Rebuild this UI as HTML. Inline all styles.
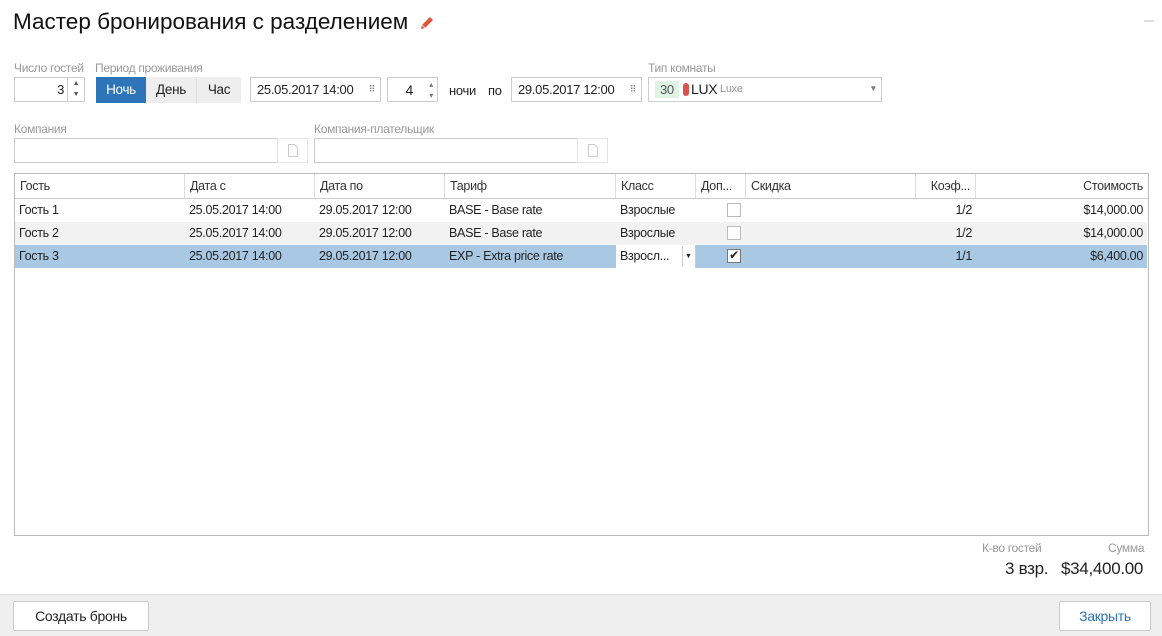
<!DOCTYPE html><html><head><meta charset="utf-8"><style>
*{box-sizing:border-box;margin:0;padding:0}
body{width:1162px;height:636px;background:#fff;font-family:"Liberation Sans",sans-serif;font-size:13px;color:#222;position:relative;overflow:hidden;letter-spacing:-0.3px}
.a{position:absolute}
.lbl{color:#999;font-size:12px}
.inp{position:absolute;border:1px solid #ccc;background:#fff;height:25px}
.hd{position:absolute;top:174px;height:25px;border-right:1px solid #ddd;padding:5px 5px;font-size:12.5px;color:#333;background:#fff}
.row{position:absolute;left:15px;width:1132px;height:23px}
.c{position:absolute;top:4px;font-size:12.5px;white-space:nowrap}
.cb{position:absolute;left:712px;top:4px;width:14px;height:14px;border:1px solid #bbb;background:#fff}
.btn{position:absolute;border:1px solid #ccc;background:#fff;border-radius:2px;height:30px;font-size:14px;text-align:center;line-height:28px}
</style></head><body>
<div class="a" style="left:13px;top:9px;font-size:22.5px;color:#111;letter-spacing:0">Мастер бронирования с разделением</div>
<svg class="a" style="left:419px;top:15px" width="16" height="16" viewBox="0 0 16 16"><path d="M2 14 L3 10 L11 2 L14 5 L6 13 Z" fill="#e0553a"/><path d="M3 10 L6 13" stroke="#fff" stroke-width="0.8"/></svg>
<div class="a" style="left:1144px;top:20px;width:10px;height:2px;background:#ddd"></div>

<div class="a lbl" style="left:14px;top:61px">Число гостей</div>
<div class="a lbl" style="left:95px;top:61px">Период проживания</div>
<div class="a lbl" style="left:648px;top:61px">Тип комнаты</div>
<div class="inp" style="left:14px;top:77px;width:54px;text-align:right;padding:4px 3px 0 0">3</div>
<div class="inp" style="left:67px;top:77px;width:18px;font-size:7px;color:#555;text-align:center;line-height:11px">▲<br>▼</div>
<div class="a" style="left:96px;top:77px;width:50px;height:26px;background:#2d74b8;color:#fff;text-align:center;line-height:26px;font-size:13.5px">Ночь</div>
<div class="a" style="left:146px;top:77px;width:51px;height:26px;background:#eee;text-align:center;line-height:26px;font-size:13.5px;border-right:1px solid #ddd">День</div>
<div class="a" style="left:197px;top:77px;width:44px;height:26px;background:#eee;text-align:center;line-height:26px;font-size:13.5px">Час</div>
<div class="inp" style="left:250px;top:77px;width:131px;padding:4px 6px">25.05.2017 14:00<span style="position:absolute;right:5px;font-size:9px;color:#777;top:6px">⠿</span></div>
<div class="inp" style="left:387px;top:77px;width:51px;padding:4px 24px 0 0;text-align:right;font-size:14px">4<span style="position:absolute;right:4px;top:1px;font-size:8px;color:#777;line-height:11px">▴<br>▾</span></div>
<div class="a" style="left:449px;top:83px">ночи</div>
<div class="a" style="left:488px;top:83px">по</div>
<div class="inp" style="left:511px;top:77px;width:131px;padding:4px 6px">29.05.2017 12:00<span style="position:absolute;right:5px;font-size:9px;color:#777;top:6px">⠿</span></div>
<div class="inp" style="left:648px;top:77px;width:234px">
<span class="a" style="left:6px;top:3px;background:#e0f4e6;color:#555;padding:1px 5px;font-size:13px">30</span>
<span class="a" style="left:34px;top:5px;width:6px;height:13px;background:#d9534f;border-radius:3px"></span>
<span class="a" style="left:42px;top:3px;font-size:14px">LUX</span>
<span class="a" style="left:71px;top:5px;font-size:11px;color:#999">Luxe</span>
<span class="a" style="right:4px;top:6px;font-size:8px;color:#777">▼</span></div>

<div class="a lbl" style="left:14px;top:122px">Компания</div>
<div class="a lbl" style="left:314px;top:122px">Компания-плательщик</div>
<div class="inp" style="left:14px;top:138px;width:264px"></div>
<div class="inp" style="left:277px;top:138px;width:31px;border-color:#e3e3e3"><svg class="a" style="left:10px;top:5px" width="10" height="13"><path d="M.5 .5h6l3 3v9h-9z" fill="none" stroke="#ccc"/></svg></div>
<div class="inp" style="left:314px;top:138px;width:264px"></div>
<div class="inp" style="left:577px;top:138px;width:31px;border-color:#e3e3e3"><svg class="a" style="left:10px;top:5px" width="10" height="13"><path d="M.5 .5h6l3 3v9h-9z" fill="none" stroke="#ccc"/></svg></div>

<div class="a" style="left:14px;top:173px;width:1135px;height:363px;border:1px solid #bbb"></div>
<div class="hd" style="left:15px;width:170px">Гость</div>
<div class="hd" style="left:185px;width:130px">Дата с</div>
<div class="hd" style="left:315px;width:130px">Дата по</div>
<div class="hd" style="left:445px;width:171px">Тариф</div>
<div class="hd" style="left:616px;width:80px">Класс</div>
<div class="hd" style="left:696px;width:50px">Доп...</div>
<div class="hd" style="left:746px;width:170px">Скидка</div>
<div class="hd" style="left:916px;width:60px;text-align:right">Коэф...</div>
<div class="hd" style="left:976px;width:172px;text-align:right;border-right:0">Стоимость</div>
<div class="a" style="left:15px;top:198px;width:1133px;height:1px;background:#ccc"></div>

<div class="row" style="top:199px;background:#fff"><span class="c" style="left:4px">Гость 1</span><span class="c" style="left:174px">25.05.2017 14:00</span><span class="c" style="left:304px">29.05.2017 12:00</span><span class="c" style="left:434px">BASE - Base rate</span><span class="c" style="left:605px">Взрослые</span><span class="cb"></span><span class="c" style="right:175px">1/2</span><span class="c" style="right:4px">$14,000.00</span></div>
<div class="row" style="top:222px;background:#f2f2f2"><span class="c" style="left:4px">Гость 2</span><span class="c" style="left:174px">25.05.2017 14:00</span><span class="c" style="left:304px">29.05.2017 12:00</span><span class="c" style="left:434px">BASE - Base rate</span><span class="c" style="left:605px">Взрослые</span><span class="cb"></span><span class="c" style="right:175px">1/2</span><span class="c" style="right:4px">$14,000.00</span></div>
<div class="row" style="top:245px;background:#a9c8e4"><span class="c" style="left:4px">Гость 3</span><span class="c" style="left:174px">25.05.2017 14:00</span><span class="c" style="left:304px">29.05.2017 12:00</span><span class="c" style="left:434px">EXP - Extra price rate</span><span class="a" style="left:601px;top:0;width:80px;height:23px;background:#fff;border-right:1px solid #ccc"></span><span class="c" style="left:605px">Взросл...</span><span class="a" style="left:667px;top:1px;height:21px;border-left:1px solid #ccc;width:1px"></span><span class="c" style="left:670px;font-size:7px;top:8px">▼</span><span class="cb" style="font-size:12px;line-height:11px;text-align:center;border-color:#777">✔</span><span class="c" style="right:175px">1/1</span><span class="c" style="right:4px">$6,400.00</span></div>

<div class="a lbl" style="left:982px;top:541px">К-во гостей</div>
<div class="a lbl" style="left:1108px;top:541px">Сумма</div>
<div class="a" style="left:1005px;top:559px;font-size:17px">3 взр.</div>
<div class="a" style="left:1061px;top:559px;font-size:17px">$34,400.00</div>

<div class="a" style="left:0;top:594px;width:1162px;height:42px;background:#efefef;border-top:1px solid #ddd"></div>
<div class="btn" style="left:13px;top:601px;width:136px">Создать бронь</div>
<div class="btn" style="left:1059px;top:601px;width:92px;color:#2d74b8">Закрыть</div>
</body></html>
